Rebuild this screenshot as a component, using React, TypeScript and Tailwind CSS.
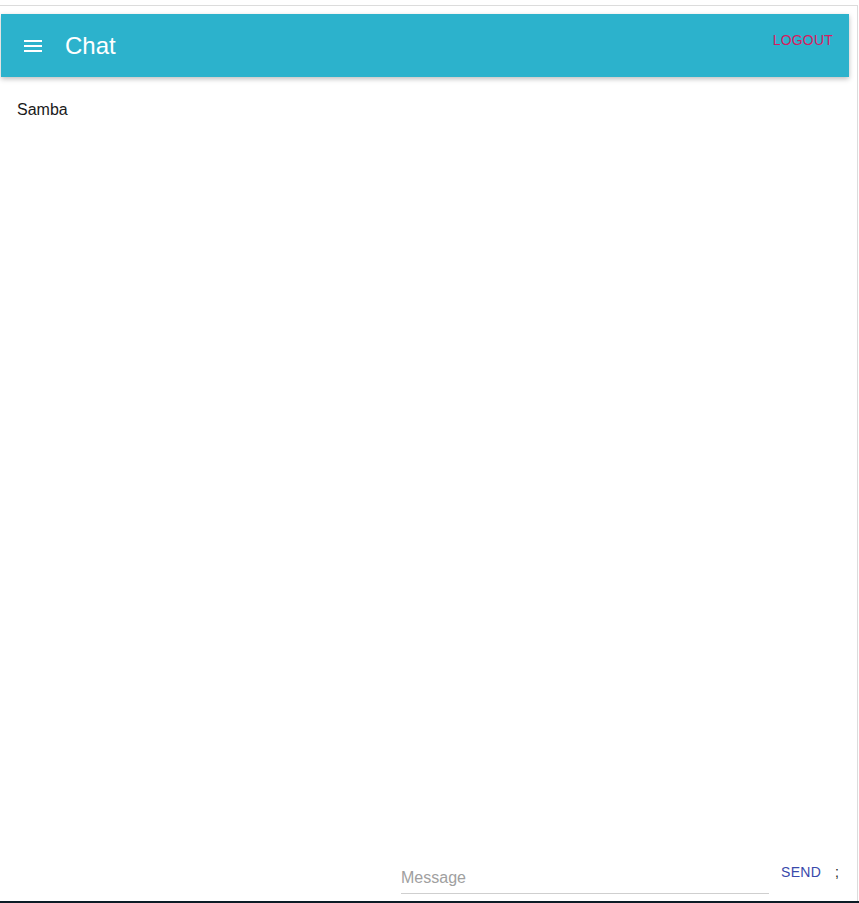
export default function App() {
  return (
    <div className="w-[859px] h-[903px] bg-white relative overflow-hidden" style={{ fontFamily: '"Liberation Sans", Arial, sans-serif' }}>
      <div className="h-[5px]" />
      <div className="w-[858px] h-[896px] border-t border-r border-[#dcdcdc] flex flex-col">
        <div className="mt-[8px] ml-[1px] w-[848px] h-[63px] bg-[#2cb2cc] shadow-[0_2px_5px_rgba(0,0,0,0.26)] flex items-start">
          <div className="h-full flex items-center pl-[23px]">
            <svg width="18" height="12" viewBox="0 0 18 12" className="block">
              <rect x="0" y="0" width="18" height="2" fill="white" />
              <rect x="0" y="5" width="18" height="2" fill="white" />
              <rect x="0" y="10" width="18" height="2" fill="white" />
            </svg>
            <span className="ml-[23px] text-[24px] text-white leading-none">Chat</span>
          </div>
          <div className="ml-auto mr-[16px] mt-[19px] text-[14px] leading-none text-[#d81b60] tracking-[0.2px]">LOGOUT</div>
        </div>
        <div className="pl-[17px] pt-[23px] text-[16px] leading-[20px] text-[#1a1a1a]">Samba</div>
        <div className="flex-1" />
        <div className="flex items-start pb-[7px]">
          <div className="ml-[401px] w-[368px] h-[31px] border-b border-[#cfcfcf] flex items-end pb-[7px]">
            <span className="text-[16px] leading-none text-[#a0a0a0]">Message</span>
          </div>
          <div className="ml-[12px] text-[14px] leading-none text-[#3949ab] tracking-[0.3px] pt-[2px]">SEND</div>
          <div className="ml-[14px] text-[14px] leading-none text-[#222] pt-[2px]">;</div>
        </div>
      </div>
      <div className="absolute left-0 bottom-0 w-full h-[2px] bg-[#0c1c26]" />
    </div>
  );
}
